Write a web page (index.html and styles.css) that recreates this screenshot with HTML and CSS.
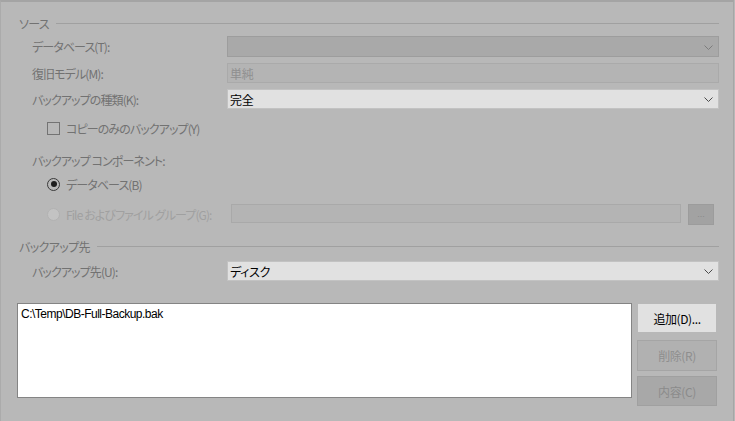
FILE: index.html
```html
<!DOCTYPE html>
<html lang="ja">
<head>
<meta charset="utf-8">
<title>バックアップ</title>
<link rel="stylesheet" href="styles.css">
</head>
<body>
<div class="window">
  <div class="group-head head-source"><span class="ttl">ソース</span><span class="rule"></span></div>

  <div class="field row1">
    <span class="lbl">データベース(T):</span>
    <div class="ctrl combo combo-off">
      <span class="val"></span>
      <svg class="chev" viewBox="0 0 9 5" width="9" height="5"><path d="M0.5 0.5 L4.5 4.5 L8.5 0.5" fill="none" stroke="#7d7d7d" stroke-width="1"/></svg>
    </div>
  </div>

  <div class="field row2">
    <span class="lbl">復旧モデル(M):</span>
    <div class="ctrl textbox-off"><span class="val val-off">単純</span></div>
  </div>

  <div class="field row3">
    <span class="lbl">バックアップの種類(K):</span>
    <div class="ctrl combo combo-on">
      <span class="val">完全</span>
      <svg class="chev" viewBox="0 0 9 5" width="9" height="5"><path d="M0.5 0.5 L4.5 4.5 L8.5 0.5" fill="none" stroke="#4a4a4a" stroke-width="1"/></svg>
    </div>
  </div>

  <div class="opt row-check">
    <span class="checkbox"></span>
    <span class="opt-lbl">コピーのみのバックアップ(Y)</span>
  </div>

  <div class="sub-lbl">バックアップ コンポーネント:</div>

  <div class="opt row-radio1">
    <span class="radio radio-on"><span class="dot"></span></span>
    <span class="opt-lbl">データベース(B)</span>
  </div>

  <div class="opt row-radio2">
    <span class="radio radio-off"></span>
    <span class="opt-lbl opt-off">File およびファイル グループ(G):</span>
    <div class="file-box"></div>
    <div class="dots-btn">...</div>
  </div>

  <div class="group-head head-dest"><span class="ttl">バックアップ先</span><span class="rule"></span></div>

  <div class="field row-dest">
    <span class="lbl">バックアップ先(U):</span>
    <div class="ctrl combo combo-on">
      <span class="val">ディスク</span>
      <svg class="chev" viewBox="0 0 9 5" width="9" height="5"><path d="M0.5 0.5 L4.5 4.5 L8.5 0.5" fill="none" stroke="#4a4a4a" stroke-width="1"/></svg>
    </div>
  </div>

  <div class="bottom">
    <div class="listbox"><div class="item">C:\Temp\DB-Full-Backup.bak</div></div>
    <div class="buttons">
      <div class="btn btn-add">追加(D)...</div>
      <div class="btn btn-del">削除(R)</div>
      <div class="btn btn-prop">内容(C)</div>
    </div>
  </div>
</div>
</body>
</html>
```

FILE: styles.css
```css
html, body {
  margin: 0;
  padding: 0;
  background: #b8b8b8;
}
body {
  width: 735px;
  height: 421px;
  overflow: hidden;
  font-family: "Noto Sans CJK JP", "Liberation Sans", sans-serif;
  font-size: 12px;
  font-feature-settings: "palt";
  color: #727272;
}
.window {
  width: 700px;
  height: 419px;
  border-top: 2px solid #a4a4a4;
  border-left: 1px solid #ababab;
  border-right: 1px solid #a6a6a6;
  padding: 0 14px 0 18px;
  box-sizing: content-box;
}
.group-head {
  display: flex;
  align-items: center;
  height: 14px;
  line-height: 14px;
}
.head-source { margin-top: 15px; }
.head-dest { margin-top: 15px; }
.ttl {
  letter-spacing: -0.6px;
  white-space: nowrap;
}
.rule {
  flex: 1;
  height: 0;
  border-top: 1px solid #a0a0a0;
  margin-left: 7px;
  margin-top: -1px;
}
.field {
  display: flex;
  align-items: center;
  padding-left: 13px;
}
.lbl {
  width: 195px;
  flex: none;
  letter-spacing: -0.9px;
  white-space: nowrap;
}
.row1 { margin-top: 5px; height: 21px; }
.row2 { margin-top: 6px; height: 20px; }
.row3 { margin-top: 6px; height: 20px; }
.row-dest { margin-top: 7px; height: 20px; }
.ctrl {
  flex: 1;
  height: 100%;
  box-sizing: border-box;
  display: flex;
  align-items: center;
  padding: 0 4px;
}
.val {
  flex: 1;
  color: #000;
  letter-spacing: -0.3px;
}
.val-off { color: #8f8f8f; }
.combo-off {
  background: #a9a9a9;
  border: 1px solid #9d9d9d;
}
.combo-on {
  background: #e1e1e1;
  border: 1px solid #c2c2c2;
  padding-left: 2px;
}
.textbox-off {
  background: #b4b4b4;
  border: 1px solid #aaaaaa;
  padding-left: 2px;
}
.chev {
  flex: none;
  margin-right: 1px;
  margin-top: 1px;
}
.opt {
  display: flex;
  align-items: center;
  padding-left: 28px;
}
.row-check { margin-top: 11px; height: 16px; }
.row-radio1 { margin-top: 7px; height: 16px; }
.row-radio2 { margin-top: 12px; height: 21px; }
.checkbox {
  width: 11px;
  height: 11px;
  border: 1px solid #737373;
  flex: none;
}
.radio {
  width: 11px;
  height: 11px;
  border-radius: 50%;
  flex: none;
  display: flex;
  align-items: center;
  justify-content: center;
}
.radio-on { border: 1px solid #3a3a3a; }
.radio-on .dot {
  width: 6px;
  height: 6px;
  border-radius: 50%;
  background: #1e1e1e;
}
.radio-off {
  border: 1px solid #b2b2b2;
  background: #c3c3c3;
}
.opt-lbl {
  margin-left: 6px;
  letter-spacing: -0.9px;
  white-space: nowrap;
}
.opt-off { color: #a0a0a0; }
.sub-lbl {
  margin-top: 17px;
  height: 16px;
  line-height: 16px;
  padding-left: 13px;
  letter-spacing: -0.9px;
}
.file-box {
  margin-left: auto;
  width: 450px;
  height: 19px;
  box-sizing: border-box;
  background: #b4b4b4;
  border: 1px solid #a9a9a9;
  align-self: flex-start;
}
.dots-btn {
  width: 26px;
  height: 21px;
  box-sizing: border-box;
  margin-left: 7px;
  margin-right: 5px;
  background: #a2a2a2;
  border: 1px solid #9c9c9c;
  color: #8a8a8a;
  font-family: "Liberation Sans", sans-serif;
  font-size: 9px;
  text-align: center;
  line-height: 19px;
  align-self: flex-start;
}
.bottom {
  display: flex;
  margin-top: 22px;
  margin-left: -2px;
}
.listbox {
  width: 615px;
  height: 95px;
  box-sizing: border-box;
  background: #fff;
  border: 1px solid #848484;
  padding: 3px 0 0 3px;
}
.item {
  font-family: "Liberation Sans", sans-serif;
  font-size: 12px;
  color: #000;
  letter-spacing: -0.5px;
  line-height: 14px;
}
.buttons {
  display: flex;
  flex-direction: column;
  margin-left: 5px;
}
.btn {
  box-sizing: border-box;
  width: 80px;
  display: flex;
  align-items: center;
  justify-content: center;
  letter-spacing: -0.4px;
}
.btn-add {
  width: 78px;
  margin: 1px 0 0 1px;
  height: 28px;
  background: #e1e1e1;
  color: #000;
}
.btn-del {
  margin-top: 8px;
  height: 31px;
  background: #b1b1b1;
  border: 1px solid #a5a5a5;
  color: #8e8e8e;
}
.btn-prop {
  margin-top: 5px;
  height: 30px;
  background: #a8a8a8;
  border: 1px solid #a0a0a0;
  color: #8b8b8b;
}
```
